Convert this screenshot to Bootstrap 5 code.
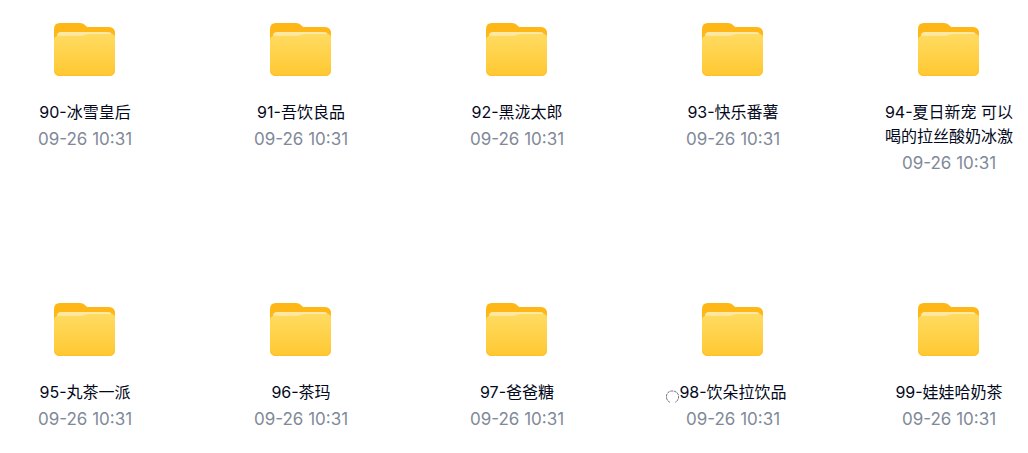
<!DOCTYPE html>
<html lang="zh-CN">
<head>
<meta charset="utf-8">
<meta name="viewport" content="width=device-width, initial-scale=1">
<title>文件夹</title>
<link href="https://cdn.jsdelivr.net/npm/bootstrap@5.3.0/dist/css/bootstrap.min.css" rel="stylesheet">
<style>
body { font-family: Inter, "Noto Sans CJK SC", sans-serif; color: #03081a; background: #fff; }
.folder-list { display: grid; grid-template-columns: repeat(5, 136px); grid-template-rows: 280px auto; padding: 20px 11px 0 17px; }
.folder-icon { width: 62px; height: 60px; }
.folder-name { font-size: 16px; line-height: 24px; max-height: 48px; margin-top: 20px; font-weight: 400; word-break: break-all; }
.folder-date { font-size: 17px; line-height: 24px; margin-top: 3px; color: #818999; }
.busy-ring { left: 0; top: 89px; width: 15px; height: 15px; }
</style>
<script src="https://cdn.jsdelivr.net/npm/bootstrap@5.3.0/dist/js/bootstrap.bundle.min.js" defer></script>
</head>
<body>
<svg width="0" height="0" class="position-absolute" aria-hidden="true">
  <defs>
    <linearGradient id="front" x1="0" y1="0" x2="0" y2="1"><stop offset="0" stop-color="#ffdb61"/><stop offset="1" stop-color="#ffc832"/></linearGradient>
    <linearGradient id="sheet" x1="0" y1="0" x2="0" y2="1"><stop offset="0" stop-color="#ffeaab"/><stop offset="1" stop-color="#ffe07c"/></linearGradient>
    <symbol id="folder" viewBox="1 0 62 60">
      <path fill="#ffb717" d="M1 9Q1 3 7 3H27Q30 3 32 5L34 7H56Q62 7 62 13.500V30H1Z"/>
      <path fill="url(#sheet)" d="M4 20V16Q4 12 8 12H55Q59 12 59 16V20Z"/>
      <path fill="url(#front)" d="M1 20Q1 16 5 16H28Q30 16 31.500 15L33 14.500Q34 14 36 14H58Q62 14 62 18V50Q62 56 56 56H7Q1 56 1 50Z"/>
      <path fill="none" stroke="#fdbc20" stroke-opacity=".65" d="M1.500 50Q1.500 55.500 7 55.500H56Q61.500 55.500 61.500 50"/>
    </symbol>
  </defs>
</svg>
<main class="folder-list justify-content-between text-center">
  <article><svg class="folder-icon d-block mx-auto" aria-hidden="true"><use href="#folder"/></svg><div class="folder-name overflow-hidden">90-冰雪皇后</div><div class="folder-date">09-26 10:31</div></article>
  <article><svg class="folder-icon d-block mx-auto" aria-hidden="true"><use href="#folder"/></svg><div class="folder-name overflow-hidden">91-吾饮良品</div><div class="folder-date">09-26 10:31</div></article>
  <article><svg class="folder-icon d-block mx-auto" aria-hidden="true"><use href="#folder"/></svg><div class="folder-name overflow-hidden">92-黑泷太郎</div><div class="folder-date">09-26 10:31</div></article>
  <article><svg class="folder-icon d-block mx-auto" aria-hidden="true"><use href="#folder"/></svg><div class="folder-name overflow-hidden">93-快乐番薯</div><div class="folder-date">09-26 10:31</div></article>
  <article><svg class="folder-icon d-block mx-auto" aria-hidden="true"><use href="#folder"/></svg><div class="folder-name overflow-hidden">94-夏日新宠 可以喝的拉丝酸奶冰激</div><div class="folder-date">09-26 10:31</div></article>
  <article><svg class="folder-icon d-block mx-auto" aria-hidden="true"><use href="#folder"/></svg><div class="folder-name overflow-hidden">95-丸茶一派</div><div class="folder-date">09-26 10:31</div></article>
  <article><svg class="folder-icon d-block mx-auto" aria-hidden="true"><use href="#folder"/></svg><div class="folder-name overflow-hidden">96-茶玛</div><div class="folder-date">09-26 10:31</div></article>
  <article><svg class="folder-icon d-block mx-auto" aria-hidden="true"><use href="#folder"/></svg><div class="folder-name overflow-hidden">97-爸爸糖</div><div class="folder-date">09-26 10:31</div></article>
  <article class="position-relative"><svg class="folder-icon d-block mx-auto" aria-hidden="true"><use href="#folder"/></svg><div class="folder-name overflow-hidden">98-饮朵拉饮品</div><div class="folder-date">09-26 10:31</div>
    <svg class="busy-ring position-absolute" viewBox="0 0 15 15" fill="none" stroke="#63506f" stroke-width=".8" aria-hidden="true"><path d="M5 13.500L2.500 11.500L1.500 9V6L3 3.500L5.500 2H9L12 3.500L13.500 6V9L12.500 11.500L10 13.500" stroke-dasharray="3 .6"/></svg>
  </article>
  <article><svg class="folder-icon d-block mx-auto" aria-hidden="true"><use href="#folder"/></svg><div class="folder-name overflow-hidden">99-娃娃哈奶茶</div><div class="folder-date">09-26 10:31</div></article>
</main>
</body>
</html>
